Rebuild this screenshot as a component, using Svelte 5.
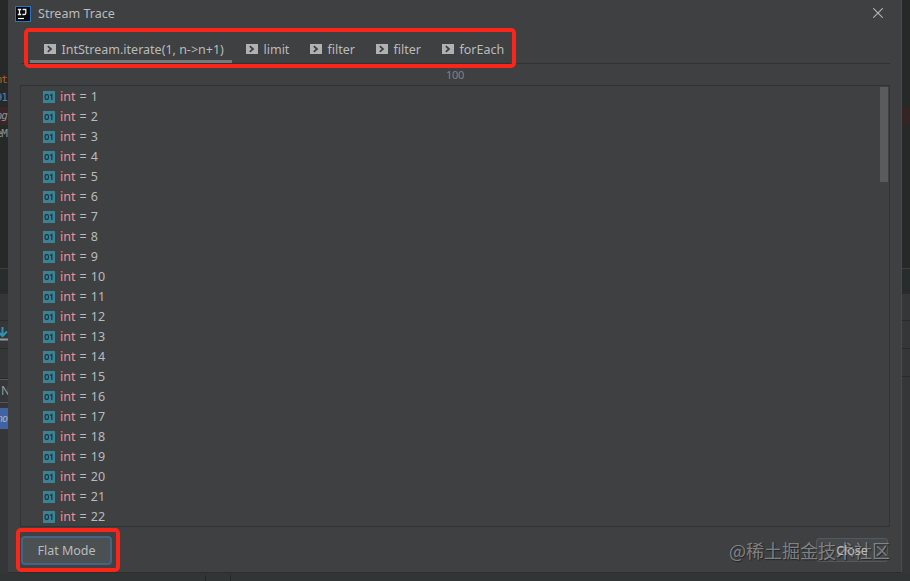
<script>
    const stages = [
        { name: 'IntStream.iterate(1, n->n+1)', width: 202, spacing: 0 },
        { name: 'limit', width: 64, spacing: 0 },
        { name: 'filter', width: 66, spacing: 0 },
        { name: 'filter', width: 66, spacing: 0 },
        { name: 'forEach', width: 80, spacing: 0 }
    ];

    const values = Array.from({ length: 22 }, (_, i) => i + 1);

    let selected = $state(0);
</script>

<div class="screen">
    <div class="editor left">
        <div class="code">
            <span class="keyword">nt</span>
            <span class="number">91</span>
            <span class="breakpoint">ng</span>
            <span>eM</span>
        </div>
        <div class="bar"></div>
        <div class="panel first"></div>
        <div class="panel download">
            <svg width="8" height="14" viewBox="0 0 8 14">
                <path d="M2.5 0v8M-2 4.5l4.5 4.5L7 4.5" fill="none" stroke="#2f92b5" stroke-width="2" />
                <path d="M0 12.5h8" stroke="#969899" stroke-width="2" />
            </svg>
        </div>
        <div class="panel space"></div>
        <div class="field">N</div>
        <div class="selection">no</div>
    </div>

    <div class="dialog">
        <header>
            <svg class="logo" width="16" height="16" viewBox="0 0 16 16">
                <rect x=".5" y=".5" width="15" height="15" fill="#08090b" stroke="#2773c4" />
                <path d="M2.8 3.5h3.4M4.5 3.5v5M2.8 8.5h3.4M7.6 3.5h3.2v3.4q0 1.6-1.6 1.6H7.4" fill="none" stroke="#f0f0f0" stroke-width="1.3" />
                <path d="M3 12.5h6" stroke="#fff" stroke-width="1.2" />
            </svg>
            <span class="title">Stream Trace</span>
            <svg class="close-icon" width="10" height="10" viewBox="0 0 10 10">
                <path d="M.3.3l9.4 9.4M9.7.3L.3 9.7" stroke="#b4b6b7" stroke-width="1.1" />
            </svg>
        </header>

        <div class="tabs">
            <div class="mark tabs-mark"></div>
            {#each stages as stage, i}
                <button
                    class="tab"
                    class:active={selected === i}
                    style="width: {stage.width}px; letter-spacing: {stage.spacing}px"
                    onclick={() => (selected = i)}
                >
                    <svg width="12" height="10" viewBox="0 0 12 10">
                        <path d="M0 0h12v10H0z" fill="#afb1b3" />
                        <path d="M3.8 2.2L7 5 3.8 7.8" fill="none" stroke="#3c3f41" stroke-width="1.7" />
                    </svg>
                    {stage.name}
                </button>
            {/each}
        </div>

        <div class="count">100</div>

        <div class="list">
            <div class="rows">
                {#each values as value}
                    <div class="row">
                        <svg width="12" height="12" viewBox="0 0 12 12">
                            <path d="M0 0h12v12H0z" fill="#3d8194" />
                            <rect x="2.1" y="3.6" width="3.3" height="4.8" rx="1.3" fill="none" stroke="#17333d" stroke-width="1.1" />
                            <path d="M7 4.4l1.8-1V9" fill="none" stroke="#17333d" stroke-width="1.2" />
                        </svg>
                        <span class="type">int</span>
                        <span class="value">= {value}</span>
                    </div>
                {/each}
            </div>
            <div class="scrollbar"></div>
        </div>

        <footer>
            <button class="flat">Flat Mode</button>
            <button class="close"><span>Close</span></button>
            <div class="mark flat-mark"></div>
            <div class="watermark">@稀土掘金技术社区</div>
        </footer>
    </div>

    <div class="editor right">
        <div class="code"><i></i></div>
        <div class="bar"></div>
        <div class="panel first"></div>
        <div class="panel middle"></div>
        <div class="panel middle"></div>
    </div>

    <div class="bottom"><i></i></div>
</div>

<style>
    :global(body) {
        overflow: hidden;
        background: #333638;
    }

    * {
        box-sizing: border-box;
    }

    svg {
        display: block;
        flex: none;
    }

    .screen {
        display: grid;
        grid-template-columns: 8px 894px 8px;
        grid-template-rows: 573px 8px;
        width: 910px;
        height: 581px;
        font-family: "Noto Sans", "Noto Sans CJK SC", sans-serif;
        font-size: 12.5px;
        color: #b9bbbc;
    }

    .editor {
        overflow: hidden;
        background: #343638;
    }

    .code {
        height: 268px;
        padding-top: 71px;
        background: #272828;
        font: 11px/18px "DejaVu Sans Mono", monospace;
        letter-spacing: -1px;
        color: #8b9094;
    }

    .code span {
        display: flex;
        justify-content: flex-end;
        width: 8px;
        height: 18px;
        padding-right: 1px;
    }

    .code .keyword {
        color: #a7652f;
    }

    .code .number {
        color: #567f9d;
    }

    .code .breakpoint {
        background: #38262a;
        font-style: italic;
    }

    .bar {
        height: 26px;
        border-top: 1px solid #3b3d3e;
        background: #292c2d;
    }

    .panel {
        border-bottom: 1px solid #282a2b;
    }

    .first {
        height: 27px;
    }

    .download {
        height: 28px;
        padding-top: 6px;
    }

    .middle {
        height: 28px;
    }

    .space {
        height: 30px;
    }

    .field {
        height: 24px;
        padding-left: 1px;
        border-top: 1px solid #555758;
        border-bottom: 1px solid #555758;
        font-size: 12px;
        line-height: 22px;
        color: #999b9c;
    }

    .selection {
        display: flex;
        justify-content: flex-end;
        height: 21px;
        margin-top: 5px;
        padding-right: 1px;
        background: #4263a3;
        font: italic 10px/21px "DejaVu Sans Mono", monospace;
        letter-spacing: -1px;
        color: #a6b2c5;
    }

    .right .code {
        padding-top: 107px;
    }

    .right .code i {
        display: block;
        height: 18px;
        background: #352424;
    }

    .dialog {
        display: flex;
        flex-direction: column;
        padding: 0 11px 0 12px;
        border-right: 1px solid #484a4b;
        border-bottom: 1px solid #2b2d2e;
        background: #3e4042;
    }

    header {
        display: flex;
        align-items: center;
        height: 27px;
        padding-right: 7px;
        margin: 0 0 1px -5px;
    }

    .title {
        margin-left: 7px;
        letter-spacing: 0.02px;
    }

    .close-icon {
        margin: -1px 0 0 auto;
    }

    button {
        padding: 0;
        border: 0;
        background: none;
        font: inherit;
        color: inherit;
    }

    .tabs {
        position: relative;
        display: flex;
        height: 36px;
        margin-left: 1px;
        padding-left: 9px;
        border-bottom: 1px solid #303233;
    }

    .tab {
        display: flex;
        align-items: center;
        gap: 6px;
        height: 35px;
        padding: 10px 0 0 13.5px;
        border-bottom: 3px solid transparent;
        white-space: nowrap;
    }

    .active {
        border-color: #777a7c;
    }

    .mark {
        position: absolute;
        border: 4px solid #f92619;
        border-radius: 5px;
        pointer-events: none;
    }

    .tabs-mark {
        left: 3px;
        top: 0;
        width: 492px;
        height: 40px;
    }

    .count {
        height: 21px;
        line-height: 22px;
        font-size: 11px;
        letter-spacing: -0.3px;
        text-align: center;
        color: #808384;
    }

    .list {
        display: flex;
        justify-content: space-between;
        height: 442px;
        padding: 1px 1px 0 22px;
        border: 1px solid #303233;
    }

    .row {
        display: flex;
        align-items: center;
        height: 20px;
    }

    .row span {
        margin-top: -1px;
    }

    .type {
        margin-left: 5px;
        color: #ee9297;
    }

    .value {
        margin-left: 4px;
        word-spacing: 1px;
    }

    .scrollbar {
        width: 8px;
        height: 95px;
        background: #5a5b5d;
    }

    footer {
        position: relative;
        display: flex;
        justify-content: space-between;
        padding: 9px 2px 0 1px;
    }

    .flat {
        width: 91px;
        height: 29px;
        border: 2px solid #436486;
        border-radius: 4px;
        background: #4b5052;
    }

    .close {
        width: 72px;
        height: 24px;
        margin-top: 2px;
        border: 1px solid #55585a;
        border-radius: 3px;
        background: #45494b;
    }

    /* keeps the label readable over the watermark */
    .close span {
        position: relative;
        z-index: 1;
    }

    .flat-mark {
        left: -4px;
        top: 1px;
        width: 104px;
        height: 44px;
    }

    .watermark {
        position: absolute;
        right: 0;
        top: 11px;
        font: 18px/24px "Noto Sans CJK SC", sans-serif;
        white-space: nowrap;
        color: rgba(170, 172, 174, 0.65);
        text-shadow: 1px 1px 1px #242627;
    }

    .bottom {
        grid-column: 1 / 4;
        background: #323536;
    }

    .bottom i {
        display: block;
        width: 26px;
        height: 6px;
        margin: 2px 0 0 205px;
        border: solid #242627;
        border-width: 0 1px;
    }
</style>
